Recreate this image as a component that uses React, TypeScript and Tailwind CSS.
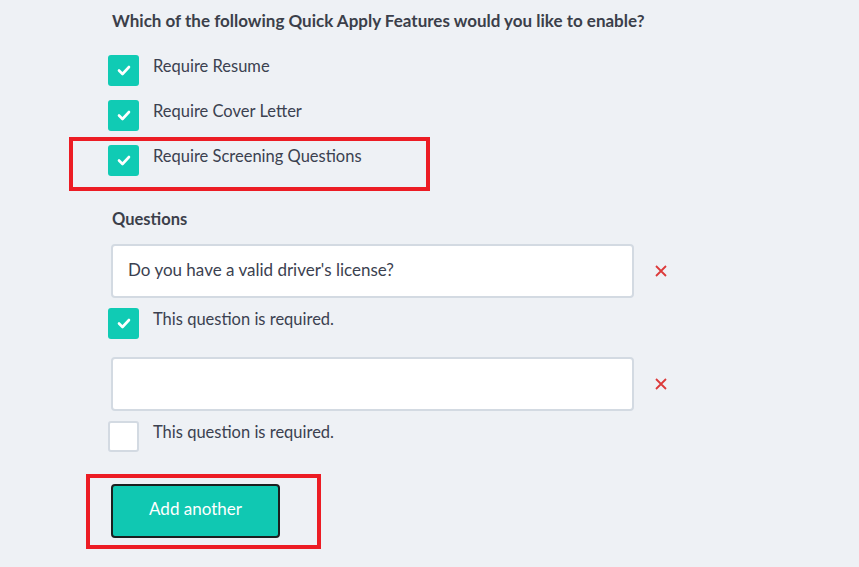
import React from "react";

const font = { fontFamily: "Lato, 'Noto Sans', sans-serif" };

function Check({ checked }: { checked: boolean }) {
  return checked ? (
    <div className="w-[31px] h-[31px] rounded-[3px] bg-[#10cbb4] flex items-center justify-center shrink-0">
      <svg width="14" height="11" viewBox="0 0 14 11" fill="none">
        <path d="M2 5.5 L5.5 9 L12 2" stroke="white" strokeWidth="2.6" strokeLinecap="round" strokeLinejoin="round" />
      </svg>
    </div>
  ) : (
    <div className="w-[31px] h-[31px] rounded-[3px] bg-white border-2 border-[#d3dae2] shrink-0" />
  );
}

function Row({ label, checked = true, children }: { label: string; checked?: boolean; children?: React.ReactNode }) {
  return (
    <div className="relative flex items-center h-[31px]">
      <Check checked={checked} />
      <span className="ml-[14px] text-[16.5px] text-[#3b4150] -mt-[8px]">{label}</span>
      {children}
    </div>
  );
}

function Question({ value }: { value: string }) {
  return (
    <div className="flex items-center ml-[3px]">
      <div className="w-[523px] h-[54px] bg-white border-2 border-[#d3dae2] rounded-[4px] flex items-center pl-[15px] text-[17px] text-[#3b4150]">
        <span className="-mt-[2px]">{value}</span>
      </div>
      <svg className="ml-[21px]" width="12" height="12" viewBox="0 0 12 12">
        <path d="M1 1 L11 11 M11 1 L1 11" stroke="#dc3a3a" strokeWidth="1.8" />
      </svg>
    </div>
  );
}

export default function App() {
  return (
    <div className="w-[859px] h-[567px] bg-[#eef1f5] overflow-hidden pl-[108px]" style={font}>
      <div className="pt-[9px] pl-[4px] text-[17px] leading-[24px] font-bold text-[#3b3f4a]">
        Which of the following Quick Apply Features would you like to enable?
      </div>
      <div className="mt-[22px] flex flex-col gap-[14px]">
        <Row label="Require Resume" />
        <Row label="Require Cover Letter" />
        <Row label="Require Screening Questions">
          <div className="absolute left-[-39px] top-[-8px] w-[361px] h-[54px] border-[4px] border-[#ec1c24] pointer-events-none" />
        </Row>
      </div>
      <div className="mt-[31px] pl-[4px] text-[16.5px] leading-[24px] font-bold text-[#3b3f4a]">Questions</div>
      <div className="mt-[13px]">
        <Question value="Do you have a valid driver's license?" />
      </div>
      <div className="mt-[10px]">
        <Row label="This question is required." />
      </div>
      <div className="mt-[18px]">
        <Question value="" />
      </div>
      <div className="mt-[10px]">
        <Row label="This question is required." checked={false} />
      </div>
      <div className="mt-[32px] ml-[3px] relative w-[169px]">
        <button className="w-[169px] h-[54px] bg-[#10c8b2] border-2 border-[#1b1f1f] rounded-[4px] text-white text-[17px] flex items-center justify-center">
          <span className="-mt-[4px]">Add another</span>
        </button>
        <div className="absolute left-[-25px] top-[-10px] w-[235px] h-[75px] border-[4px] border-[#ec1c24] pointer-events-none" />
      </div>
    </div>
  );
}
